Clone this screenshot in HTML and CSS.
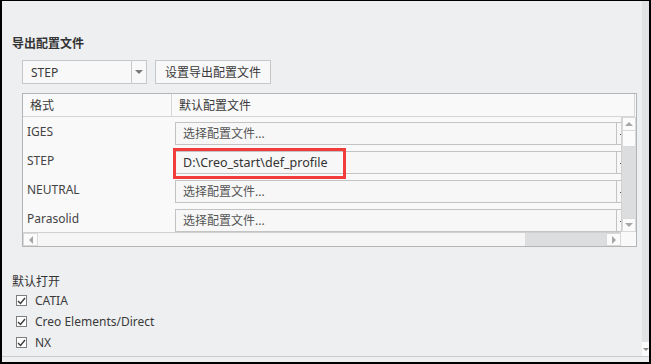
FILE: index.html
```html
<!DOCTYPE html>
<html lang="zh-CN">
<head>
    <meta charset="UTF-8">
    <title>导出配置文件</title>
    <link rel="stylesheet" href="styles.css">
</head>
<body>
    <div class="frame">
        <div class="top">
            <div class="main">
                <div class="heading">导出配置文件</div>
                <div class="toolbar">
                    <div class="combo">
                        <span class="combo-text">STEP</span>
                        <span class="combo-arrow"><span class="tri-down"></span></span>
                    </div>
                    <div class="btn">设置导出配置文件</div>
                </div>

                <div class="grid">
                    <div class="grid-head">
                        <div class="col-a">格式</div>
                        <div class="col-b">默认配置文件</div>
                    </div>
                    <div class="grid-mid">
                        <div class="rows">
                            <div class="row">
                                <div class="label">IGES</div>
                                <div class="cell">
                                    <div class="field"><span class="field-text muted">选择配置文件...</span><span class="browse"><i></i></span></div>
                                </div>
                            </div>
                            <div class="row">
                                <div class="label">STEP</div>
                                <div class="cell">
                                    <div class="field"><span class="field-text">D:\Creo_start\def_profile</span><span class="browse"><i></i></span></div>
                                    <div class="mark"></div>
                                </div>
                            </div>
                            <div class="row">
                                <div class="label">NEUTRAL</div>
                                <div class="cell">
                                    <div class="field"><span class="field-text muted">选择配置文件...</span><span class="browse"><i></i></span></div>
                                </div>
                            </div>
                            <div class="row">
                                <div class="label">Parasolid</div>
                                <div class="cell">
                                    <div class="field"><span class="field-text muted">选择配置文件...</span><span class="browse"><i></i></span></div>
                                </div>
                            </div>
                        </div>
                        <div class="vscroll">
                            <div class="arrow-box"><span class="tri-up"></span></div>
                            <div class="vthumb"></div>
                            <div class="vtrack"></div>
                            <div class="arrow-box"><span class="tri-down"></span></div>
                        </div>
                    </div>
                    <div class="grid-foot">
                        <div class="hscroll">
                            <div class="arrow-box h"><span class="tri-left"></span></div>
                            <div class="hthumb"></div>
                            <div class="htrack"></div>
                            <div class="arrow-box h"><span class="tri-right"></span></div>
                        </div>
                        <div class="corner"></div>
                    </div>
                </div>

                <div class="heading plain">默认打开</div>
                <div class="checks">
                    <label class="check"><span class="box"><svg width="9" height="8" viewBox="0 0 9 8"><path d="M1 4 L3.5 6.5 L8 1" fill="none" stroke="#3a3a3a" stroke-width="1.4"/></svg></span>CATIA</label>
                    <label class="check"><span class="box"><svg width="9" height="8" viewBox="0 0 9 8"><path d="M1 4 L3.5 6.5 L8 1" fill="none" stroke="#3a3a3a" stroke-width="1.4"/></svg></span>Creo Elements/Direct</label>
                    <label class="check"><span class="box"><svg width="9" height="8" viewBox="0 0 9 8"><path d="M1 4 L3.5 6.5 L8 1" fill="none" stroke="#3a3a3a" stroke-width="1.4"/></svg></span>NX</label>
                </div>
            </div>
            <div class="side">
                <div class="side-end"><span class="tri-down small"></span></div>
            </div>
        </div>
        <div class="strip"></div>
    </div>
</body>
</html>
```

FILE: styles.css
```css
body {
    margin: 0;
    font-family: "Noto Sans", "Noto Sans CJK SC", sans-serif;
    font-size: 12px;
    color: #3a3a3a;
}
.frame {
    width: 651px;
    height: 364px;
    box-sizing: border-box;
    border: 2px solid #000;
    border-top-width: 1px;
    background-color: #eeeff1;
    display: flex;
    flex-direction: column;
}
.top {
    display: flex;
    height: 355px;
    border-bottom: 1px solid #c8c9cb;
}
.main {
    flex: 1;
    padding: 35px 0 0 10px;
    display: flex;
    flex-direction: column;
    align-items: flex-start;
}
.side {
    width: 7px;
    background-color: #e1e2e3;
    display: flex;
    flex-direction: column;
    justify-content: flex-end;
}
.side-end {
    height: 14px;
    background-color: #fafafa;
    display: flex;
    align-items: center;
    justify-content: flex-end;
}
.heading {
    line-height: 16px;
    font-weight: bold;
    color: #333;
}
.heading.plain {
    font-weight: normal;
    margin-top: 27px;
}

/* toolbar */
.toolbar {
    display: flex;
    gap: 8px;
    margin: 8px 0 0 10px;
}
.combo, .btn {
    height: 24px;
    box-sizing: border-box;
    border: 1px solid #c6c7c9;
    background-color: #f8f8f8;
    display: flex;
    align-items: center;
}
.combo {
    width: 125px;
}
.combo-text {
    flex: 1;
    padding-left: 8px;
}
.combo-arrow {
    width: 14px;
    height: 22px;
    border-left: 1px solid #c6c7c9;
    display: flex;
    align-items: center;
    justify-content: center;
}
.btn {
    width: 116px;
    justify-content: center;
}

/* triangles */
.tri-down, .tri-up, .tri-left, .tri-right {
    width: 0;
    height: 0;
    border: 4px solid transparent;
}
.tri-down { border-top-color: #7a7a7a; border-bottom-width: 0; }
.tri-up { border-bottom-color: #a6a6a6; border-top-width: 0; }
.tri-left { border-right-color: #a6a6a6; border-left-width: 0; }
.tri-right { border-left-color: #a6a6a6; border-right-width: 0; }
.vscroll .tri-down { border-top-color: #a6a6a6; }
.tri-down.small { border-width: 3px 3px 0 3px; border-top-color: #8a8a8a; }

/* grid */
.grid {
    width: 615px;
    box-sizing: border-box;
    margin: 9px 0 0 10px;
    border: 1px solid #b3b4b6;
    background-color: #f9f9f9;
}
.grid-head {
    display: flex;
    width: 611px;
    height: 22px;
    border-bottom: 1px solid #d6d6d6;
    border-right: 1px solid #d6d6d6;
    align-items: center;
}
.col-a {
    width: 149px;
    height: 100%;
    border-right: 1px solid #d6d6d6;
    padding-left: 7px;
    box-sizing: border-box;
    display: flex;
    align-items: center;
}
.col-b {
    padding-left: 7px;
}
.grid-mid {
    display: flex;
    height: 115px;
}
.rows {
    width: 598px;
    flex: none;
    overflow: hidden;
}
.row {
    display: flex;
    height: 29px;
}
.label {
    width: 150px;
    flex: none;
    padding-left: 4px;
    box-sizing: border-box;
    display: flex;
    align-items: center;
    color: #444;
}
.cell {
    flex: none;
    position: relative;
    padding: 5px 0 0 2px;
}
.field {
    display: flex;
    height: 23px;
    box-sizing: border-box;
    border: 1px solid #c3c3c3;
    background-color: #f7f7f7;
    width: 480px;
}
.field-text {
    width: 441px;
    flex: none;
    box-sizing: border-box;
    border-right: 1px solid #c3c3c3;
    padding-left: 7px;
    line-height: 21px;
    font-size: 12.5px;
    color: #333;
}
.field-text.muted {
    font-size: 12px;
    color: #555;
}
.browse {
    flex: 1;
    padding: 0 0 0 3px;
    display: flex;
    align-items: center;
}
.browse i {
    width: 1px;
    height: 1px;
    margin-top: 2px;
    background-color: #555;
}
.mark {
    position: absolute;
    left: 0;
    top: 2px;
    width: 173px;
    height: 31px;
    box-sizing: border-box;
    border: 3px solid #f23b3b;
}

/* scrollbars */
.vscroll {
    width: 15px;
    box-sizing: border-box;
    border-left: 1px solid #d0d0d0;
    display: flex;
    flex-direction: column;
}
.arrow-box {
    height: 14px;
    box-sizing: border-box;
    border: 1px solid #d9d9d9;
    background-color: #fbfbfb;
    display: flex;
    align-items: center;
    justify-content: center;
    flex: none;
}
.vthumb {
    height: 16px;
    box-sizing: border-box;
    border: 1px solid #d9d9d9;
    border-top: none;
    background-color: #fbfbfb;
}
.vtrack {
    flex: 1;
    background-color: #dcdddf;
}
.grid-foot {
    display: flex;
    height: 14px;
}
.hscroll {
    width: 598px;
    flex: none;
    display: flex;
    border-top: 1px solid #d0d0d0;
    box-sizing: border-box;
}
.arrow-box.h {
    width: 15px;
    height: 13px;
}
.hthumb {
    width: 487px;
    background-color: #f6f6f6;
}
.htrack {
    flex: 1;
    background-color: #dcdddf;
}
.corner {
    flex: 1;
}

/* checkboxes */
.checks {
    display: flex;
    flex-direction: column;
    padding-left: 4px;
}
.check {
    height: 21px;
    display: flex;
    align-items: center;
    gap: 8px;
    color: #3a3a3a;
}
.box {
    width: 11px;
    height: 11px;
    box-sizing: border-box;
    border: 1px solid #7d7d7d;
    background-color: #fff;
    display: flex;
    align-items: center;
    justify-content: center;
}
.strip {
    flex: 1;
}
```
